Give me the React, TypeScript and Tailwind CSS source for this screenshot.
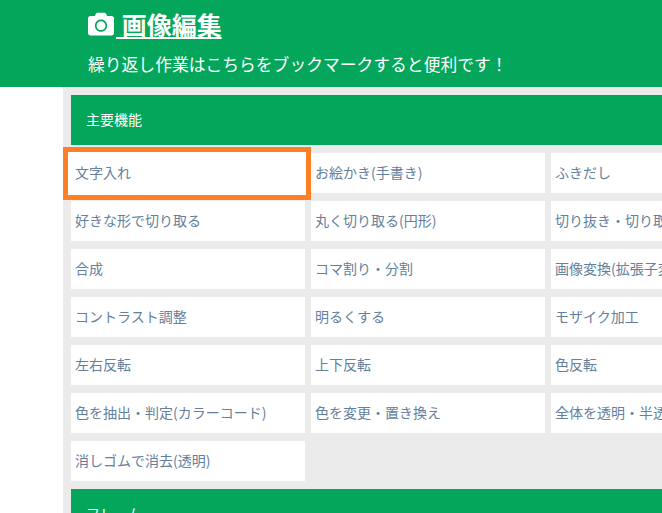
import React from 'react';
import { FaCamera } from 'react-icons/fa';

const tools = [
  "文字入れ", "お絵かき(手書き)", "ふきだし",
  "好きな形で切り取る", "丸く切り取る(円形)", "切り抜き・切り取り",
  "合成", "コマ割り・分割", "画像変換(拡張子変更)",
  "コントラスト調整", "明るくする", "モザイク加工",
  "左右反転", "上下反転", "色反転",
  "色を抽出・判定(カラーコード)", "色を変更・置き換え", "全体を透明・半透明",
  "消しゴムで消去(透明)",
];

function SectionBar({ label }: { label: string }) {
  return (
    <div className="flex h-[50px] w-[714px] items-center bg-[#03a65a] pb-[1px] pl-[15px] text-[14px] text-white">
      {label}
    </div>
  );
}

export default function App() {
  return (
    <div className="h-[513px] w-[662px] overflow-hidden bg-white font-['Noto_Sans_CJK_JP','Noto_Sans',sans-serif]">
      {/* header */}
      <header className="h-[87px] bg-[#03a65a] pl-[88px] pt-[6px] text-white">
        <h1 className="flex h-[36px] items-center text-[25px] leading-none font-bold">
          <FaCamera className="h-[26px] w-[26px]" />
          <span className="ml-[2px] whitespace-pre underline underline-offset-[2px]"> 画像編集</span>
        </h1>
        <p className="mt-[10px] text-[16.8px] leading-[24px] whitespace-nowrap">
          繰り返し作業はこちらをブックマークすると便利です！
        </p>
      </header>

      <div className="flex">
        <div className="w-[63px] shrink-0" />
        <main className="h-[426px] w-[730px] shrink-0 bg-[#ebebeb] pt-[8px] pl-[8px]">
          <SectionBar label="主要機能" />
          <div className="mt-[8px] grid grid-cols-[234px_234px_234px] gap-x-[6px] gap-y-[8px]">
            {tools.map((t, i) => (
              <div
                key={t}
                className="relative flex h-[40px] items-center bg-white pb-[2px] pl-[4px] text-[14px] whitespace-nowrap text-[#64809c]"
              >
                {i === 0 && (
                  <div className="absolute top-[-6px] right-[-6px] bottom-[-7px] left-[-8px] border-[5px] border-[#ff7f27] bg-white" />
                )}
                <span className="relative">{t}</span>
              </div>
            ))}
          </div>
          <div className="mt-[8px]">
            <SectionBar label="フレーム" />
          </div>
        </main>
      </div>
    </div>
  );
}
